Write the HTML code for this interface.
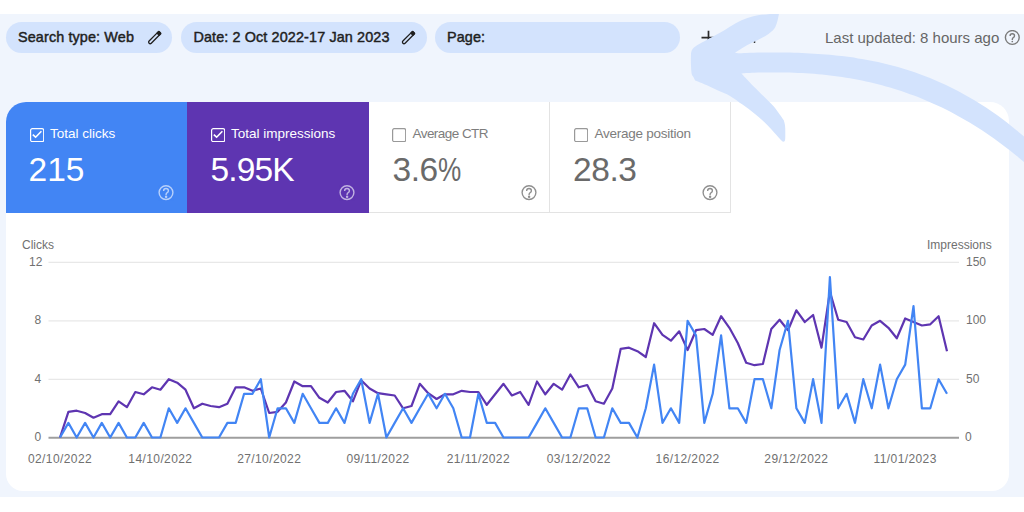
<!DOCTYPE html>
<html><head><meta charset="utf-8">
<style>
html,body{margin:0;padding:0;}
body{width:1024px;height:512px;overflow:hidden;position:relative;background:#fff;font-family:"Liberation Sans",sans-serif;}
.bg{position:absolute;left:0;top:14px;width:1024px;height:483px;background:#f0f5fd;}
.chip{position:absolute;top:22px;height:31px;border-radius:16px;background:#d3e3fd;}
.t{position:absolute;white-space:nowrap;line-height:1;}
.ct{font-size:14.4px;font-weight:normal;color:#1f1f1f;top:29.9px;-webkit-text-stroke:0.45px #1f1f1f;letter-spacing:0.12px;}
.card{position:absolute;left:6px;top:102px;width:1003px;height:389px;background:#fff;border-radius:20px 19px 17px 17px;overflow:hidden;}
.tile{position:absolute;top:0;height:111px;box-sizing:border-box;}
.lbl{position:absolute;left:44px;top:25.2px;font-size:13.5px;line-height:1;white-space:nowrap;}
.val{position:absolute;left:22.5px;top:50.5px;font-size:33.5px;line-height:1;white-space:nowrap;}
.cb{position:absolute;left:24px;top:26px;width:14.3px;height:14.3px;}
.help{position:absolute;left:152px;top:82.5px;width:16px;height:16px;}
.axl{position:absolute;font-size:12px;color:#707070;line-height:1;white-space:nowrap;}
.xl{width:100px;text-align:center;letter-spacing:0.4px;}
</style></head><body>
<div class="bg"></div>
<div class="chip" style="left:6px;width:166px;"></div>
<div class="chip" style="left:181px;width:246px;"></div>
<div class="chip" style="left:435px;width:245px;"></div>
<div class="t ct" style="left:18px;">Search type: Web</div>
<div class="t ct" style="left:193.4px;">Date: 2 Oct 2022-17 Jan 2023</div>
<div class="t ct" style="left:447px;">Page:</div>
<svg style="position:absolute;left:0;top:0" width="1024" height="60">
  <g transform="translate(154.5,37.8) rotate(-45)" stroke="#1f1f1f"><rect x="-7.65" y="-1.55" width="15.3" height="3.1" rx="1.55" fill="none" stroke-width="1.3"/><rect x="4.4" y="-2.2" width="3.9" height="4.4" rx="1" fill="#1f1f1f" stroke="none"/></g>
  <g transform="translate(408.3,37.8) rotate(-45)" stroke="#1f1f1f"><rect x="-7.65" y="-1.55" width="15.3" height="3.1" rx="1.55" fill="none" stroke-width="1.3"/><rect x="4.4" y="-2.2" width="3.9" height="4.4" rx="1" fill="#1f1f1f" stroke="none"/></g>
  <path d="M701.5,37.6 H715.5 M708.5,30.8 V44.5" stroke="#2a2a2a" stroke-width="1.7"/>
  <circle cx="754.5" cy="42" r="0.9" fill="#1f1f1f"/>
</svg>
<div class="t" style="left:825px;top:29.9px;font-size:15px;color:#666;">Last updated: 8 hours ago</div>
<svg style="position:absolute;left:1004px;top:30px" width="17" height="17" viewBox="0 0 17 17"><g fill="none" stroke="#7a7a7a" stroke-width="1.4"><circle cx="8.3" cy="7.5" r="6.9"/><path d="M6.1,5.9 Q6.1,3.8 8.3,3.8 Q10.5,3.8 10.5,5.8 Q10.5,7 9.3,7.6 Q8.3,8.1 8.3,9.5 V9.9"/></g><circle cx="8.3" cy="11.5" r="0.85" fill="#7a7a7a"/></svg>

<div class="card">
  <div class="tile" style="left:0;width:181px;background:#4285f4;color:#fff;">
    <svg class="cb" viewBox="0 0 14.3 14.3"><rect x="0.6" y="0.6" width="13.1" height="13.1" rx="1.8" fill="none" stroke="#fff" stroke-width="1.2"/><path d="M2.8,6.6 L5.6,9.2 L11.4,3.2" fill="none" stroke="#fff" stroke-width="1.6"/></svg>
    <div class="lbl">Total clicks</div>
    <div class="val">215</div>
    <svg class="help" viewBox="0 0 16 16"><g opacity="0.62" fill="none" stroke="#fff" stroke-width="1.4"><circle cx="8" cy="7.6" r="6.9"/><path d="M5.6,5.9 Q5.6,3.5 8,3.5 Q10.4,3.5 10.4,5.7 Q10.4,6.9 9.2,7.6 Q8.1,8.2 8.1,9.6 V10.1"/><circle cx="8.1" cy="11.8" r="0.55" fill="#fff"/></g></svg>
  </div>
  <div class="tile" style="left:181px;width:181.5px;background:#5e35b1;color:#fff;">
    <svg class="cb" viewBox="0 0 14.3 14.3"><rect x="0.6" y="0.6" width="13.1" height="13.1" rx="1.8" fill="none" stroke="#fff" stroke-width="1.2"/><path d="M2.8,6.6 L5.6,9.2 L11.4,3.2" fill="none" stroke="#fff" stroke-width="1.6"/></svg>
    <div class="lbl">Total impressions</div>
    <div class="val" style="left:23.5px;letter-spacing:-0.85px">5.95K</div>
    <svg class="help" viewBox="0 0 16 16"><g opacity="0.62" fill="none" stroke="#fff" stroke-width="1.4"><circle cx="8" cy="7.6" r="6.9"/><path d="M5.6,5.9 Q5.6,3.5 8,3.5 Q10.4,3.5 10.4,5.7 Q10.4,6.9 9.2,7.6 Q8.1,8.2 8.1,9.6 V10.1"/><circle cx="8.1" cy="11.8" r="0.55" fill="#fff"/></g></svg>
  </div>
  <div class="tile" style="left:362.5px;width:181.5px;border-right:1px solid #e3e3e3;border-bottom:1px solid #e3e3e3;color:#6a6a6a;">
    <svg class="cb" style="left:23.3px" viewBox="0 0 14.3 14.3"><rect x="0.6" y="0.6" width="13.1" height="13.1" rx="1.8" fill="none" stroke="#999" stroke-width="1.25"/></svg>
    <div class="lbl" style="color:#7d7d7d;letter-spacing:-0.55px">Average CTR</div>
    <div class="val" style="left:24px;letter-spacing:-0.5px">3.6<span style="display:inline-block;transform:scale(0.78,0.97);transform-origin:0 100%;margin-right:-6px">%</span></div>
    <svg class="help" viewBox="0 0 16 16"><g fill="none" stroke="#8f8f8f" stroke-width="1.35"><circle cx="8" cy="7.6" r="6.9"/><path d="M5.6,5.9 Q5.6,3.5 8,3.5 Q10.4,3.5 10.4,5.7 Q10.4,6.9 9.2,7.6 Q8.1,8.2 8.1,9.6 V10.1"/><circle cx="8.1" cy="11.8" r="0.55" fill="#8f8f8f"/></g></svg>
  </div>
  <div class="tile" style="left:543.5px;width:181.5px;border-right:1px solid #e3e3e3;border-bottom:1px solid #e3e3e3;color:#6a6a6a;">
    <svg class="cb" style="left:24.5px" viewBox="0 0 14.3 14.3"><rect x="0.6" y="0.6" width="13.1" height="13.1" rx="1.8" fill="none" stroke="#999" stroke-width="1.25"/></svg>
    <div class="lbl" style="color:#7d7d7d;left:45px;letter-spacing:-0.25px">Average position</div>
    <div class="val" style="left:23.5px;letter-spacing:-0.4px">28.3</div>
    <svg class="help" style="left:152.5px" viewBox="0 0 16 16"><g fill="none" stroke="#8f8f8f" stroke-width="1.35"><circle cx="8" cy="7.6" r="6.9"/><path d="M5.6,5.9 Q5.6,3.5 8,3.5 Q10.4,3.5 10.4,5.7 Q10.4,6.9 9.2,7.6 Q8.1,8.2 8.1,9.6 V10.1"/><circle cx="8.1" cy="11.8" r="0.55" fill="#8f8f8f"/></g></svg>
  </div>
</div>

<div class="axl" style="left:22px;top:239.2px;">Clicks</div>
<div class="axl" style="left:927px;top:239.2px;">Impressions</div>
<div class="axl" style="left:29px;top:255.8px;">12</div>
<div class="axl" style="left:34.5px;top:314px;">8</div>
<div class="axl" style="left:34.5px;top:372.9px;">4</div>
<div class="axl" style="left:34.5px;top:431.3px;">0</div>
<div class="axl" style="left:966px;top:255.8px;">150</div>
<div class="axl" style="left:966px;top:314px;">100</div>
<div class="axl" style="left:966px;top:372.9px;">50</div>
<div class="axl" style="left:965px;top:431.3px;">0</div>
<div class="axl xl" style="left:10.0px;top:453.2px;">02/10/2022</div>
<div class="axl xl" style="left:110.4px;top:453.2px;">14/10/2022</div>
<div class="axl xl" style="left:219.2px;top:453.2px;">27/10/2022</div>
<div class="axl xl" style="left:328.0px;top:453.2px;">09/11/2022</div>
<div class="axl xl" style="left:428.4px;top:453.2px;">21/11/2022</div>
<div class="axl xl" style="left:528.8px;top:453.2px;">03/12/2022</div>
<div class="axl xl" style="left:637.6px;top:453.2px;">16/12/2022</div>
<div class="axl xl" style="left:746.4px;top:453.2px;">29/12/2022</div>
<div class="axl xl" style="left:855.2px;top:453.2px;">11/01/2023</div>

<svg style="position:absolute;left:0;top:0" width="1024" height="512">
  <line x1="48.5" y1="262.4" x2="959" y2="262.4" stroke="#e8e8e8" stroke-width="1.3"/>
  <line x1="48.5" y1="320.8" x2="959" y2="320.8" stroke="#e8e8e8" stroke-width="1.3"/>
  <line x1="48.5" y1="379.3" x2="959" y2="379.3" stroke="#e8e8e8" stroke-width="1.3"/>
  <line x1="48.5" y1="437.8" x2="959" y2="437.8" stroke="#9e9e9e" stroke-width="2"/>
  <path d="M60.0,437.5 L68.4,411.8 L76.7,410.7 L85.1,413.0 L93.5,417.7 L101.8,414.2 L110.2,414.2 L118.6,401.3 L126.9,407.2 L135.3,392.0 L143.7,394.3 L152.0,387.3 L160.4,389.7 L168.8,379.2 L177.2,382.7 L185.5,389.7 L193.9,408.3 L202.3,403.7 L210.6,406.0 L219.0,407.2 L227.4,403.7 L235.7,387.3 L244.1,387.3 L252.5,390.8 L260.8,388.5 L269.2,413.0 L277.6,411.8 L285.9,402.5 L294.3,381.5 L302.7,386.2 L311.0,386.2 L319.4,397.8 L327.8,402.5 L336.1,392.0 L344.5,390.8 L352.9,401.3 L361.2,380.3 L369.6,388.5 L378.0,393.2 L386.4,394.3 L394.7,395.5 L403.1,408.3 L411.5,406.0 L419.8,383.8 L428.2,393.2 L436.6,399.0 L444.9,394.3 L453.3,394.3 L461.7,390.8 L470.0,392.0 L478.4,392.0 L486.8,404.8 L495.1,394.3 L503.5,383.8 L511.9,395.5 L520.2,392.0 L528.6,404.8 L537.0,381.5 L545.3,394.3 L553.7,383.8 L562.1,389.7 L570.4,374.5 L578.8,387.3 L587.2,385.0 L595.6,401.3 L603.9,403.7 L612.3,388.5 L620.7,348.8 L629.0,347.7 L637.4,351.2 L645.8,357.0 L654.1,323.2 L662.5,334.8 L670.9,340.7 L679.2,331.3 L687.6,350.0 L696.0,330.2 L704.3,329.0 L712.7,334.8 L721.1,316.2 L729.4,327.8 L737.8,343.0 L746.2,362.8 L754.5,365.2 L762.9,364.0 L771.3,329.0 L779.6,319.7 L788.0,330.2 L796.4,310.3 L804.8,322.0 L813.1,315.0 L821.5,347.7 L829.9,291.7 L838.2,319.7 L846.6,322.0 L855.0,337.2 L863.3,339.5 L871.7,325.5 L880.1,320.8 L888.4,327.8 L896.8,338.3 L905.2,318.5 L913.5,322.0 L921.9,325.5 L930.3,324.3 L938.6,316.2 L947.0,351.2" fill="none" stroke="#5e35b1" stroke-width="2.2" stroke-linejoin="round"/>
  <path d="M60.0,437.5 L68.4,422.9 L76.7,437.5 L85.1,422.9 L93.5,437.5 L101.8,422.9 L110.2,437.5 L118.6,422.9 L126.9,437.5 L135.3,437.5 L143.7,422.9 L152.0,437.5 L160.4,437.5 L168.8,408.3 L177.2,422.9 L185.5,408.3 L193.9,422.9 L202.3,437.5 L210.6,437.5 L219.0,437.5 L227.4,422.9 L235.7,422.9 L244.1,393.8 L252.5,393.8 L260.8,379.2 L269.2,437.5 L277.6,408.3 L285.9,408.3 L294.3,422.9 L302.7,393.8 L311.0,408.3 L319.4,422.9 L327.8,422.9 L336.1,408.3 L344.5,422.9 L352.9,393.8 L361.2,379.2 L369.6,422.9 L378.0,393.8 L386.4,437.5 L394.7,422.9 L403.1,408.3 L411.5,422.9 L419.8,408.3 L428.2,393.8 L436.6,408.3 L444.9,393.8 L453.3,408.3 L461.7,437.5 L470.0,437.5 L478.4,393.8 L486.8,422.9 L495.1,422.9 L503.5,437.5 L511.9,437.5 L520.2,437.5 L528.6,437.5 L537.0,422.9 L545.3,408.3 L553.7,422.9 L562.1,437.5 L570.4,437.5 L578.8,408.3 L587.2,408.3 L595.6,437.5 L603.9,437.5 L612.3,408.3 L620.7,422.9 L629.0,422.9 L637.4,437.5 L645.8,408.3 L654.1,364.6 L662.5,422.9 L670.9,408.3 L679.2,422.9 L687.6,320.8 L696.0,335.4 L704.3,422.9 L712.7,393.8 L721.1,335.4 L729.4,408.3 L737.8,408.3 L746.2,422.9 L754.5,379.2 L762.9,379.2 L771.3,408.3 L779.6,350.0 L788.0,320.8 L796.4,408.3 L804.8,422.9 L813.1,379.2 L821.5,422.9 L829.9,277.1 L838.2,408.3 L846.6,393.8 L855.0,422.9 L863.3,379.2 L871.7,408.3 L880.1,364.6 L888.4,408.3 L896.8,379.2 L905.2,364.6 L913.5,306.2 L921.9,408.3 L930.3,408.3 L938.6,379.2 L947.0,393.8" fill="none" stroke="#4285f4" stroke-width="2.2" stroke-linejoin="round"/>
</svg>
<svg style="position:absolute;left:0;top:0" width="1024" height="512">
  <defs><clipPath id="cl"><rect x="0" y="14" width="1024" height="483"/></clipPath></defs>
  <path clip-path="url(#cl)" fill="#d3e3fd" d="M779.5,11 C778.1,11.5 774.3,13.1 770.9,13.8 C767.5,14.5 763.1,14.4 759.2,15.1 C755.3,15.8 751.3,16.7 747.4,18.1 C743.5,19.5 739.6,21.2 735.7,23.3 C731.8,25.4 727.9,28.1 724.0,30.4 C720.1,32.7 716.2,34.7 712.1,37.0 C708.0,39.3 702.4,42.1 699.2,44.1 C696.0,46.1 694.2,47.2 692.8,48.8 C691.4,50.3 691.3,52.6 691.0,53.4 C691.0,55.0 690.8,59.7 690.9,63.0 C691.0,66.3 691.2,71.1 691.6,73.4 C692.0,75.7 692.8,75.7 693.4,76.9 C694.0,78.1 694.8,79.8 695.1,80.4 C697.0,81.2 702.6,83.3 706.4,85.0 C710.2,86.7 714.1,88.7 718.0,90.5 C721.9,92.3 725.9,93.6 730.0,95.9 C734.1,98.2 738.3,101.6 742.5,104.6 C746.7,107.6 750.8,110.6 755.0,114.0 C759.2,117.4 763.3,121.1 767.5,125.2 C771.7,129.4 777.4,136.2 780.0,139.0 C782.6,141.8 782.6,141.3 783.1,141.8 C783.4,141.5 784.6,141.9 785.0,140.2 C785.4,138.6 785.3,134.5 785.3,132.0 C785.3,129.5 785.3,127.2 785.0,125.2 C784.7,123.3 784.0,121.1 783.8,120.2 C782.1,118.0 777.5,110.9 773.8,106.5 C770.0,102.1 765.0,97.8 761.2,94.0 C757.5,90.2 754.6,87.4 751.2,84.0 C747.9,80.6 743.0,75.3 741.4,73.6 C742.2,73.5 743.9,73.3 746.0,73.1 C748.1,73.0 751.3,72.9 754.0,72.8 C756.7,72.7 759.3,72.6 762.0,72.6 C764.7,72.5 767.3,72.4 770.0,72.4 C772.7,72.4 775.3,72.4 778.0,72.4 C780.7,72.4 783.3,72.4 786.0,72.5 C788.7,72.5 791.3,72.6 794.0,72.7 C796.7,72.8 799.3,72.9 802.0,73.1 C804.7,73.2 807.3,73.4 810.0,73.5 C812.7,73.7 815.3,73.9 818.0,74.2 C820.7,74.4 823.3,74.7 826.0,75.0 C828.7,75.3 831.3,75.6 834.0,75.9 C836.7,76.3 839.3,76.6 842.0,77.0 C844.7,77.4 847.3,77.9 850.0,78.3 C852.7,78.8 855.3,79.3 858.0,79.8 C860.7,80.3 863.3,80.9 866.0,81.5 C868.7,82.0 871.3,82.6 874.0,83.3 C876.7,83.9 879.3,84.6 882.0,85.3 C884.7,86.1 887.3,86.8 890.0,87.6 C892.7,88.4 895.3,89.2 898.0,90.1 C900.7,90.9 903.3,91.8 906.0,92.7 C908.7,93.7 911.3,94.6 914.0,95.6 C916.7,96.6 919.3,97.7 922.0,98.8 C924.7,99.9 927.3,101.0 930.0,102.2 C932.7,103.3 935.3,104.5 938.0,105.8 C940.7,107.0 943.3,108.3 946.0,109.6 C948.7,111.0 951.3,112.4 954.0,113.8 C956.7,115.2 959.3,116.7 962.0,118.2 C964.7,119.7 967.3,121.2 970.0,122.8 C972.7,124.4 975.3,126.1 978.0,127.8 C980.7,129.5 983.3,131.2 986.0,133.0 C988.7,134.8 991.3,136.7 994.0,138.5 C996.7,140.4 999.3,142.4 1002.0,144.4 C1004.7,146.4 1007.3,148.4 1010.0,150.5 C1012.7,152.6 1015.3,154.7 1018.0,156.9 C1020.7,159.1 1024.7,162.6 1026.0,163.7 L1026.0,138.2 C1024.7,137.1 1020.7,133.6 1018.0,131.4 C1015.3,129.2 1012.7,127.0 1010.0,124.9 C1007.3,122.8 1004.7,120.8 1002.0,118.8 C999.3,116.8 996.7,114.9 994.0,113.0 C991.3,111.1 988.7,109.3 986.0,107.6 C983.3,105.8 980.7,104.1 978.0,102.5 C975.3,100.8 972.7,99.2 970.0,97.7 C967.3,96.1 964.7,94.6 962.0,93.2 C959.3,91.7 956.7,90.3 954.0,89.0 C951.3,87.6 948.7,86.3 946.0,85.1 C943.3,83.8 940.7,82.6 938.0,81.4 C935.3,80.3 932.7,79.2 930.0,78.1 C927.3,77.0 924.7,76.0 922.0,75.0 C919.3,74.0 916.7,73.0 914.0,72.1 C911.3,71.2 908.7,70.4 906.0,69.5 C903.3,68.7 900.7,67.9 898.0,67.1 C895.3,66.4 892.7,65.7 890.0,65.0 C887.3,64.3 884.7,63.6 882.0,63.0 C879.3,62.4 876.7,61.8 874.0,61.3 C871.3,60.7 868.7,60.2 866.0,59.7 C863.3,59.2 860.7,58.8 858.0,58.4 C855.3,57.9 852.7,57.5 850.0,57.1 C847.3,56.8 844.7,56.4 842.0,56.1 C839.3,55.8 836.7,55.5 834.0,55.2 C831.3,55.0 828.7,54.7 826.0,54.5 C823.3,54.3 820.7,54.1 818.0,53.9 C815.3,53.7 812.7,53.5 810.0,53.4 C807.3,53.3 804.7,53.1 802.0,53.0 C799.3,52.9 796.7,52.8 794.0,52.8 C791.3,52.7 788.7,52.6 786.0,52.6 C783.3,52.6 780.7,52.5 778.0,52.5 C775.3,52.5 772.7,52.5 770.0,52.5 C767.3,52.5 764.7,52.6 762.0,52.6 C759.3,52.6 756.7,52.7 754.0,52.7 C751.3,52.8 748.7,52.8 746.0,52.9 C743.3,53.0 739.8,53.3 738.0,53.3 C736.2,53.3 735.6,52.7 735.1,52.6 C737.1,51.3 743.4,47.2 747.4,45.0 C751.4,42.8 755.7,41.1 759.2,39.2 C762.7,37.4 766.0,35.7 768.5,33.9 C771.0,32.1 772.9,30.7 774.4,28.6 C775.9,26.6 776.4,24.5 777.3,21.6 C778.1,18.7 779.1,12.8 779.5,11.0 Z"/>
</svg>
</body></html>
